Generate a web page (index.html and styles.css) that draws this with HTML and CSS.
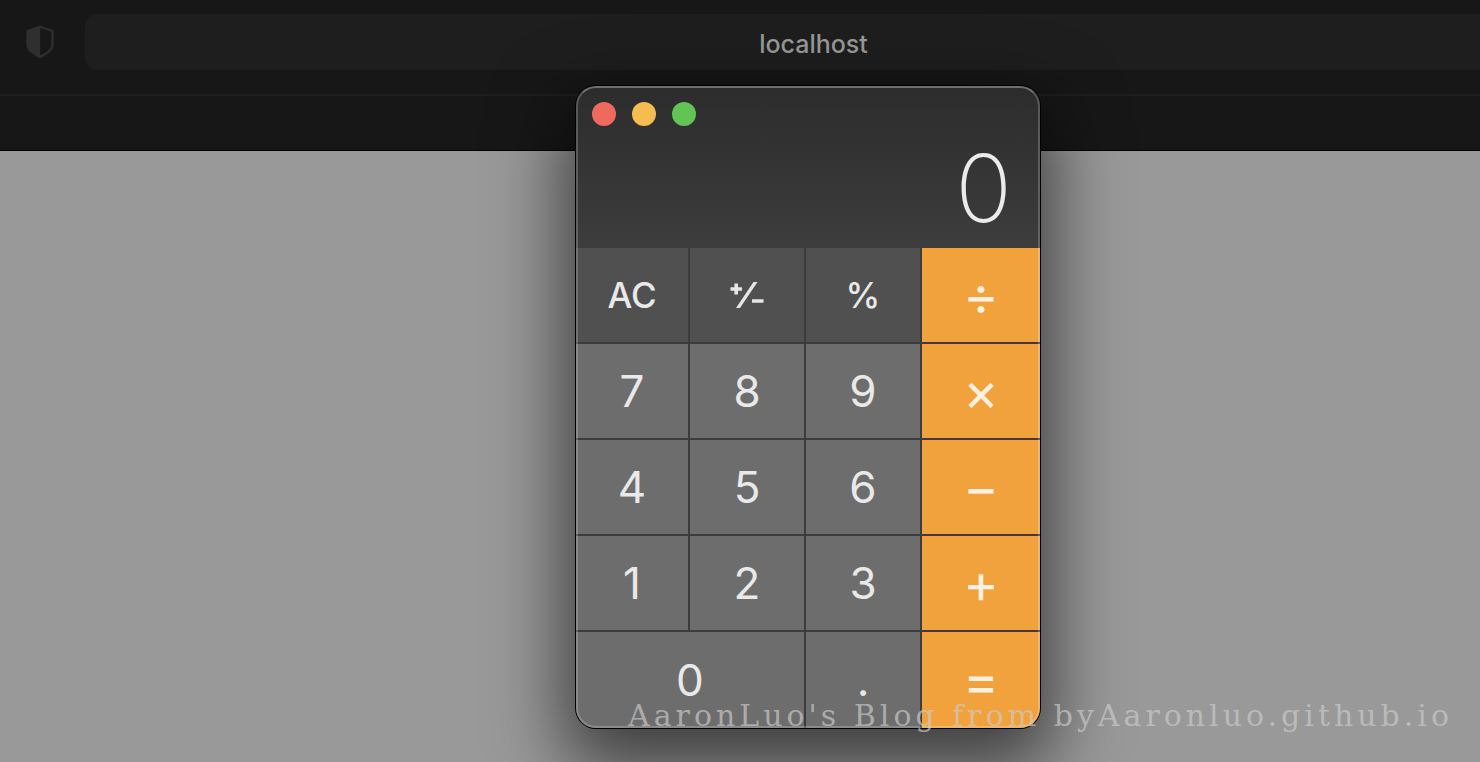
FILE: index.html
```html
<!DOCTYPE html>
<html lang="en">
<head>
<meta charset="utf-8">
<meta name="viewport" content="width=device-width, initial-scale=1">
<title>Calculator</title>
<link rel="stylesheet" href="styles.css">
</head>
<body>
<div class="desktop">
  <header class="browser">
    <div class="toolbar">
      <svg class="shield" viewBox="0 0 28 34" aria-hidden="true">
        <path d="M14 0.5 L1.8 4.8 Q0.3 5.4 0.3 7 V20 Q0.3 23.5 3 26 Q7 29.5 12.5 32.7 Q14 33.5 15.5 32.7 Q21 29.5 25 26 Q27.7 23.5 27.7 20 V7 Q27.7 5.4 26.2 4.8 Z" fill="#2f2f2f"/>
        <path d="M14.2 3 L24 6.3 Q25.2 6.8 25.2 8 V20 Q25.2 23 22.5 25.3 Q19 28.3 14.2 30.6 Z" fill="#171717"/>
      </svg>
      <div class="address">localhost</div>
    </div>
    <div class="tabs"></div>
  </header>
  <main class="page"></main>

  <section class="calculator" aria-label="Calculator">
    <div class="head">
      <div class="lights">
        <button class="light close" aria-label="Close"></button>
        <button class="light minimize" aria-label="Minimize"></button>
        <button class="light zoom" aria-label="Zoom"></button>
      </div>
      <output class="display">0</output>
    </div>
    <div class="keys">
      <button class="key fn">AC</button>
      <button class="key fn" aria-label="Plus or minus">
        <svg class="sign" viewBox="0 0 34 28" aria-hidden="true">
          <path d="M0.5 8H12M6.2 2.4V13.6M22 20H33.5" fill="none" stroke="#e6e6e6" stroke-width="3.6"/>
          <path d="M6 27H10L27.5 1H23.5Z" fill="#e6e6e6"/>
        </svg>
      </button>
      <button class="key fn">%</button>
      <button class="key op">÷</button>
      <button class="key">7</button>
      <button class="key">8</button>
      <button class="key">9</button>
      <button class="key op">×</button>
      <button class="key">4</button>
      <button class="key">5</button>
      <button class="key">6</button>
      <button class="key op">−</button>
      <button class="key">1</button>
      <button class="key">2</button>
      <button class="key">3</button>
      <button class="key op">+</button>
      <button class="key wide">0</button>
      <button class="key">.</button>
      <button class="key op">=</button>
    </div>
  </section>
  <p class="watermark">AaronLuo's Blog from byAaronluo.github.io</p>
</div>
</body>
</html>
```
FILE: styles.css
```css
* { box-sizing: border-box; }
body {
  margin: 0;
  font-family: Inter, "Liberation Sans", sans-serif;
}
.desktop {
  position: relative;
  display: flex;
  flex-direction: column;
  min-height: 100vh;
  overflow: hidden;
  background: #999;
}
.browser {
  background: #171717;
  border-bottom: 1px solid #000;
}
.toolbar {
  display: flex;
  align-items: center;
  gap: 31px;
  margin-right: -62px;
  padding: 14px 0 24px 26px;
}
.shield { width: 28px; height: 34px; }
.address {
  flex: 1;
  border-radius: 12px;
  background: #1e1e1e;
  color: #999;
  font-size: 25px;
  font-weight: 450;
  line-height: 56px;
  padding-top: 2px;
  height: 56px;
  text-align: center;
}
.tabs {
  height: 56px;
  border-top: 2px solid #1e1e1e;
}
.page { flex: 1; }
.calculator {
  position: absolute;
  left: 576px;
  top: 86px;
  width: 464px;
  border-radius: 20px;
  overflow: hidden;
  background: #3c3c3c;
  box-shadow: 0 0 0 1px #000, 0 28px 72px 12px rgba(0, 0, 0, 0.6);
}
.calculator::after {
  content: "";
  position: absolute;
  inset: 0;
  border: 2px solid rgba(255, 255, 255, 0.2);
  border-top-color: rgba(255, 255, 255, 0.32);
  border-radius: 20px;
  pointer-events: none;
}
.head {
  padding: 16px 28px 0 16px;
  height: 162px;
  background: linear-gradient(#2c2c2c, #3d3d3d);
}
.lights { display: flex; gap: 16px; }
.light {
  width: 24px;
  height: 24px;
  padding: 0;
  border: 0;
  border-radius: 50%;
}
.close { background: #ee6a5f; }
.minimize { background: #f5bd4f; }
.zoom { background: #61c455; }
.display {
  display: block;
  color: #ebebeb;
  font-size: 94px;
  font-weight: 200;
  line-height: 124px;
  text-align: right;
}
.keys {
  display: grid;
  grid-template-columns: 112fr 114fr 114fr 118fr;
  grid-template-rows: repeat(4, 94px) 96px;
  gap: 2px;
}
.key {
  display: flex;
  align-items: center;
  justify-content: center;
  min-width: 0;
  padding: 0;
  border: 0;
  background: #6d6d6d;
  color: #e9e9e9;
  font-family: inherit;
  font-size: 44px;
  font-weight: 430;
}
.fn { background: #505050; font-size: 35px; font-weight: 480; }
.op { background: #f1a23c; color: #fff0df; font-size: 55px; font-weight: 400; }
.wide { grid-column: span 2; }
.sign { width: 34px; height: 28px; }
.watermark {
  position: absolute;
  right: 27px;
  bottom: 28px;
  margin: 0;
  color: rgba(204, 204, 204, 0.68);
  font-family: "DejaVu Serif", serif;
  font-size: 30px;
  line-height: 36px;
  letter-spacing: 4px;
  white-space: nowrap;
}
```
